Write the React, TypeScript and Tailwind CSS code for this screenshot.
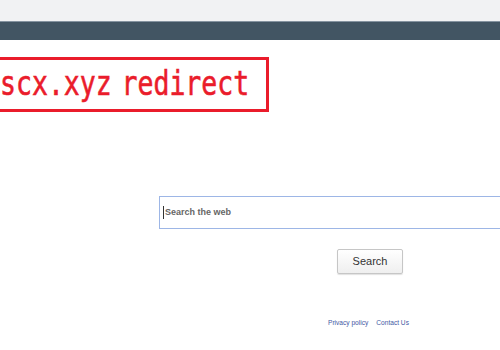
import React from "react";

export default function App() {
  return (
    <div className="w-[500px] h-[350px] overflow-hidden bg-white relative" style={{ fontFamily: '"Liberation Sans", Arial, sans-serif' }}>
      <div className="h-[21px] bg-[#f1f2f3]" />
      <div className="h-[19px] bg-[#425563] border-t border-[#8593a0]" />
      <div className="mt-[17px] -ml-[20px] w-[289px] h-[55px] border-[3px] border-[#ea1c2b] flex items-center overflow-hidden">
        <span
          className="ml-[17px] inline-block whitespace-nowrap text-[#ea1c2b] text-[34px] leading-none origin-left scale-x-[0.78] -mt-[4px] [word-spacing:-8px] [-webkit-text-stroke:0.6px_#ea1c2b]"
          style={{ fontFamily: '"DejaVu Sans Mono", monospace' }}
        >
          scx.xyz redirect
        </span>
      </div>
      <div className="mt-[84px] ml-[159px] w-[380px] h-[33px] border border-[#9db6e6] flex items-center pl-[3px]">
        <span className="w-px h-[13px] bg-[#333]" />
        <span className="ml-[1px] text-[9px] text-[#666] font-bold">Search the web</span>
      </div>
      <div className="mt-[20px] ml-[337px] w-[66px] h-[25px] border border-[#c6c6c6] rounded-[2px] bg-gradient-to-b from-white to-[#efefef] shadow-[0_1px_1px_rgba(0,0,0,0.12)] flex items-center justify-center text-[11px] text-[#333]">
        Search
      </div>
      <div className="mt-[46px] ml-[328px] flex gap-[8px] text-[6.6px] text-[#4458a3] leading-none">
        <span>Privacy policy</span>
        <span>Contact Us</span>
      </div>
    </div>
  );
}
